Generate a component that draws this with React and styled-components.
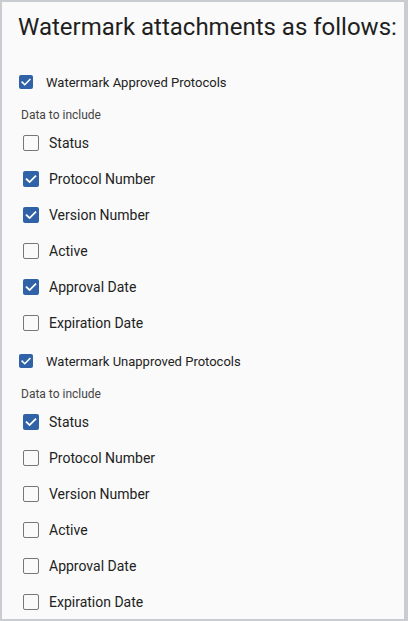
import React from 'react';
import styled, { createGlobalStyle } from 'styled-components';

const GlobalStyle = createGlobalStyle`
  html, body {
    margin: 0;
    padding: 0;
    background: #fafafa;
  }
  * {
    box-sizing: border-box;
  }
`;

const Frame = styled('div')`
  width: 408px;
  height: 621px;
  border-style: solid;
  border-color: #c9cdd1;
  border-width: 2px 4px 2px 2px;
  background: #fafafa;
  font-family: Roboto, 'Liberation Sans', sans-serif;
  color: #212121;
  overflow: hidden;
`;

const Heading = styled('h1')`
  margin: 11px 0 21px 16px;
  font-size: 24px;
  line-height: 28px;
  font-weight: 400;
  color: #1f1f1f;
  white-space: nowrap;
`;

const Section = styled('div')`
  display: flex;
  flex-direction: column;
`;

const MainRow = styled('label')`
  display: flex;
  align-items: center;
  gap: 13px;
  height: 40px;
  padding-left: 17px;
  font-size: 13px;
  color: #222;
`;

const DataLabel = styled('div')`
  height: 23px;
  padding: 3px 0 0 19px;
  font-size: 12px;
  line-height: 20px;
  color: #444;
`;

const SubRow = styled('label')`
  display: flex;
  align-items: center;
  gap: 10px;
  height: 36px;
  padding-left: 21px;
  font-size: 14px;
  color: #222;
`;

const Box = styled('span')`
  display: inline-flex;
  align-items: center;
  justify-content: center;
  flex: none;
  width: ${({ $size }) => $size}px;
  height: ${({ $size }) => $size}px;
  border-radius: 2px;
  background: ${({ $checked }) => ($checked ? '#2f62a6' : 'transparent')};
  border: ${({ $checked }) => ($checked ? 'none' : '1.5px solid #777')};
`;

const Check = ({ checked, size }) => (
  <Box $checked={checked} $size={size}>
    {checked && (
      <svg width={size} height={size} viewBox="0 0 16 16">
        <path
          d="M3.6 8.2 L6.6 11.1 L12.4 5.2"
          fill="none"
          stroke="#fff"
          strokeWidth="1.8"
          strokeLinecap="square"
        />
      </svg>
    )}
  </Box>
);

const FIELDS = [
  'Status',
  'Protocol Number',
  'Version Number',
  'Active',
  'Approval Date',
  'Expiration Date',
];

const sections = [
  { title: 'Watermark Approved Protocols', on: ['Protocol Number', 'Version Number', 'Approval Date'] },
  { title: 'Watermark Unapproved Protocols', on: ['Status'] },
];

export default function App() {
  return (
    <>
      <GlobalStyle />
      <Frame>
        <Heading>Watermark attachments as follows:</Heading>
        {sections.map((s) => (
          <Section key={s.title}>
            <MainRow>
              <Check checked size={14} />
              {s.title}
            </MainRow>
            <DataLabel>Data to include</DataLabel>
            {FIELDS.map((f) => (
              <SubRow key={f}>
                <Check checked={s.on.includes(f)} size={16} />
                {f}
              </SubRow>
            ))}
          </Section>
        ))}
      </Frame>
    </>
  );
}
